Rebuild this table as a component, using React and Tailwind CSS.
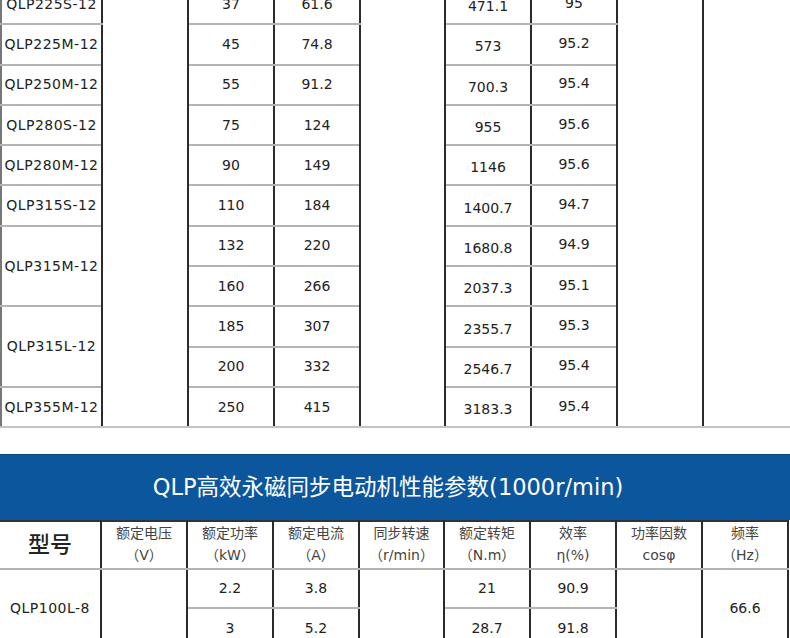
const font = { fontFamily: '"DejaVu Sans", "Noto Sans CJK SC", sans-serif' };

const topRows = [
  { model: 'QLP225S-12', span: 1, kw: '37', a: '61.6', nm: '471.1', eff: '95' },
  { model: 'QLP225M-12', span: 1, kw: '45', a: '74.8', nm: '573', eff: '95.2' },
  { model: 'QLP250M-12', span: 1, kw: '55', a: '91.2', nm: '700.3', eff: '95.4' },
  { model: 'QLP280S-12', span: 1, kw: '75', a: '124', nm: '955', eff: '95.6' },
  { model: 'QLP280M-12', span: 1, kw: '90', a: '149', nm: '1146', eff: '95.6' },
  { model: 'QLP315S-12', span: 1, kw: '110', a: '184', nm: '1400.7', eff: '94.7' },
  { model: 'QLP315M-12', span: 2, kw: '132', a: '220', nm: '1680.8', eff: '94.9' },
  { model: null, kw: '160', a: '266', nm: '2037.3', eff: '95.1' },
  { model: 'QLP315L-12', span: 2, kw: '185', a: '307', nm: '2355.7', eff: '95.3' },
  { model: null, kw: '200', a: '332', nm: '2546.7', eff: '95.4' },
  { model: 'QLP355M-12', span: 1, kw: '250', a: '415', nm: '3183.3', eff: '95.4' },
];

const headers = [
  ['额定电压', '（V）'],
  ['额定功率', '（kW）'],
  ['额定电流', '（A）'],
  ['同步转速', '（r/min）'],
  ['额定转矩', '（N.m）'],
  ['效率', 'η(%)'],
  ['功率因数', 'cosφ'],
  ['频率', '（Hz）'],
];

const cell = 'border-x-2 border-x-[#2b2b2b] border-y-2 border-y-[#b4b4b4] text-center align-middle p-0 text-[14px] text-[#222]';

function Cols() {
  return (
    <colgroup>
      <col className="w-[101px]" />
      <col className="w-[86px]" />
      <col className="w-[86px]" />
      <col className="w-[86px]" />
      <col className="w-[85px]" />
      <col className="w-[86px]" />
      <col className="w-[86px]" />
      <col className="w-[86px]" />
      <col className="w-[86px]" />
    </colgroup>
  );
}

function TopTable() {
  return (
    <div className="overflow-hidden h-[428px] border-b-2 border-[#c4c4c4]">
      <table className="table-fixed border-collapse w-[788px] -mt-[17px]" style={font}>
        <Cols />
        <tbody>
          {topRows.map((r, i) => (
            <tr key={i} className="h-[40.3px]">
              {r.model && (
                <td rowSpan={r.span} className={`${cell} border-l-[#777] tracking-[0.5px] text-[14.5px]`}>
                  {r.model}
                </td>
              )}
              {i === 0 && <td rowSpan={11} className={cell}></td>}
              <td className={cell}>{r.kw}</td>
              <td className={cell}>{r.a}</td>
              {i === 0 && <td rowSpan={11} className={cell}></td>}
              <td className={`${cell} pt-[5px]`}>{r.nm}</td>
              <td className={`${cell} pb-[2px]`}>{r.eff}</td>
              {i === 0 && <td rowSpan={11} className={cell}></td>}
              {i === 0 && <td rowSpan={11} className={`${cell} border-r-0`}></td>}
            </tr>
          ))}
        </tbody>
      </table>
    </div>
  );
}

function BottomTable() {
  return (
    <div>
      <div
        className="h-[66px] bg-[#0b569c] border-t border-[#08457f] flex items-center justify-center text-white text-[22.5px] pr-[14px]"
        style={font}
      >
        QLP高效永磁同步电动机性能参数(1000r/min)
      </div>
      <table className="table-fixed border-collapse w-[788px]" style={font}>
        <Cols />
        <tbody>
          <tr className="h-[48px]">
            <td className={`${cell} border-l-0 border-t-[#333] text-[22px] font-medium text-[#111] pb-[2px]`}>型号</td>
            {headers.map((h, i) => (
              <td key={i} className={`${cell} border-t-[#333] text-[13.5px] text-[#444] leading-[22px] pb-[2px]`}>
                <div>{h[0]}</div>
                <div>{h[1]}</div>
              </td>
            ))}
          </tr>
          <tr className="h-[39px]">
            <td rowSpan={2} className={`${cell} border-l-0 tracking-[0.5px] text-[14.5px]`}>QLP100L-8</td>
            <td rowSpan={2} className={cell}></td>
            <td className={cell}>2.2</td>
            <td className={cell}>3.8</td>
            <td rowSpan={2} className={cell}></td>
            <td className={cell}>21</td>
            <td className={cell}>90.9</td>
            <td rowSpan={2} className={cell}></td>
            <td rowSpan={2} className={cell}>66.6</td>
          </tr>
          <tr className="h-[40px]">
            <td className={cell}>3</td>
            <td className={cell}>5.2</td>
            <td className={cell}>28.7</td>
            <td className={cell}>91.8</td>
          </tr>
        </tbody>
      </table>
    </div>
  );
}

export default function App() {
  return (
    <div className="w-[790px] h-[638px] overflow-hidden bg-white">
      <TopTable />
      <div className="h-[26px]" />
      <BottomTable />
    </div>
  );
}
